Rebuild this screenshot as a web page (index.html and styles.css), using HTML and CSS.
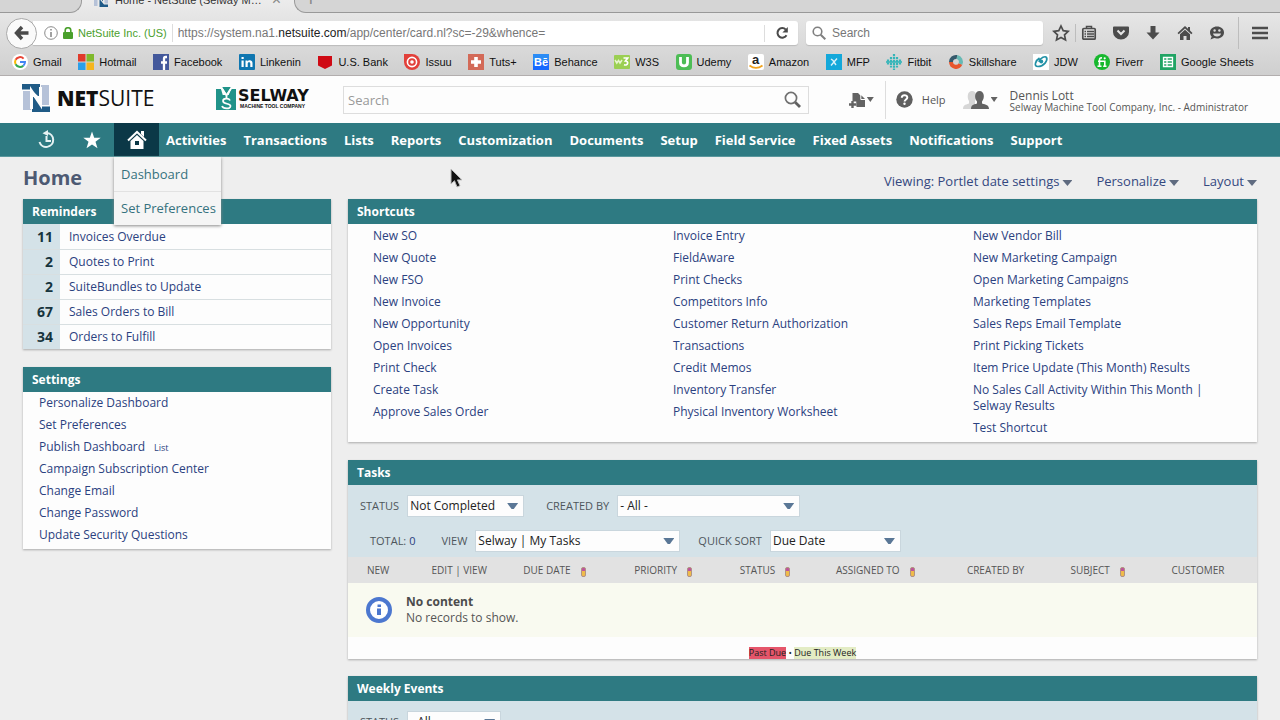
FILE: index.html
```html
<!DOCTYPE html>
<html lang="en">
<head>
<meta charset="utf-8">
<title>Home - NetSuite (Selway Machine Tool Company, Inc.)</title>
<link rel="stylesheet" href="styles.css">
</head>
<body>
<div class="window">
  <div class="browser">
    <div class="tabstrip">
      <div class="tab-edge tab-edge-left"></div>
      <div class="tab">
        <svg class="tab-icon" width="14" height="14" viewBox="0 0 28 28" aria-hidden="true"><path fill="#1f5a88" d="M0 0h18v17L8 5H0zM28 28H11V12l9 11h8z"/><path fill="#b6c2d8" d="M0 7h7v19H0zM21 1h7v20h-7z"/></svg>
        <span class="tab-title">Home - NetSuite (Selway M…</span>
        <button class="tab-close" aria-label="Close tab">×</button>
      </div>
      <div class="tab-edge tab-edge-right"><button class="tab-new" aria-label="New tab">+</button></div>
    </div>

    <div class="toolbar">
      <button class="back" aria-label="Back"><svg width="16" height="16" viewBox="0 0 16 16"><path d="M8 2 2.500 8 8 14M3 8h11.500" fill="none" stroke="#4a4a4a" stroke-width="3.400"/></svg></button>
      <div class="urlbar">
        <svg width="14" height="14" viewBox="0 0 14 14" aria-hidden="true"><circle cx="7" cy="7" r="6.300" fill="none" stroke="#8a8a8a"/><path d="M6.200 3h1.600v1.600H6.200zM6.200 6h1.600v5H6.200z" fill="#8a8a8a"/></svg>
        <svg width="10" height="12" viewBox="0 0 10 12" aria-hidden="true"><path d="M2.200 6V3.500a2.800 2.800 0 0 1 5.600 0V6" fill="none" stroke="#4aa02c" stroke-width="1.600"/><rect y="5" width="10" height="7" rx="1" fill="#4aa02c"/></svg>
        <span class="identity">NetSuite Inc. (US)</span>
        <div class="url" role="textbox" contenteditable="true" aria-label="Address">https://system.na1.<b>netsuite.com</b>/app/center/card.nl?sc=-29&amp;whence=</div>
        <button class="reload" aria-label="Reload"><svg width="14" height="14" viewBox="0 0 14 14"><path d="M11.500 9.200A4.800 4.800 0 1 1 10.800 3.600" fill="none" stroke="#4a4a4a" stroke-width="2"/><path d="M12.800 1v5.400H7.400z" fill="#4a4a4a"/></svg></button>
      </div>
      <div class="websearch">
        <svg width="14" height="14" viewBox="0 0 14 14" aria-hidden="true"><circle cx="5.500" cy="5.500" r="4.300" fill="none" stroke="#808080" stroke-width="1.600"/><path d="m8.700 8.700 4.600 4.600" stroke="#808080" stroke-width="2"/></svg>
        <input type="text" placeholder="Search" aria-label="Web search">
      </div>
      <div class="tools">
        <button aria-label="Bookmark"><svg width="18" height="18" viewBox="0 0 18 18"><path d="m9 2 2.200 4.700 5 .6-3.700 3.500 1 5.100L9 13.400l-4.500 2.500 1-5.100L1.800 7.300l5-.6z" fill="none" stroke="#4c4c4c" stroke-width="1.700"/></svg></button>
        <span class="rule rule-short"></span>
        <button aria-label="Reading list"><svg width="16" height="16" viewBox="0 0 16 16"><path d="M5.500 3V1.500h5V3" fill="none" stroke="#4c4c4c" stroke-width="1.500"/><rect x="1.800" y="3.500" width="12.400" height="10.700" rx="1" fill="none" stroke="#4c4c4c" stroke-width="1.700"/><path d="M3.500 6.500h1.500M6 6.500h7M3.500 9h1.500M6 9h7M3.500 11.500h1.500M6 11.500h7" stroke="#4c4c4c" stroke-width="1.300"/></svg></button>
        <button aria-label="Pocket"><svg width="16" height="16" viewBox="0 0 16 16"><path d="M1 1.500h14a1 1 0 0 1 1 1V7A8 7.500 0 0 1 0 7V2.500a1 1 0 0 1 1-1z" fill="#4c4c4c"/><path d="m4.500 5.500 3.500 3.500 3.500-3.500" fill="none" stroke="#e6e6e6" stroke-width="2"/></svg></button>
        <button aria-label="Downloads"><svg width="16" height="16" viewBox="0 0 16 16"><path d="M5.500 1h5v6.500h4L8 14.500 1.500 7.500h4z" fill="#4c4c4c"/></svg></button>
        <button aria-label="Home page"><svg width="16" height="16" viewBox="0 0 16 16"><path d="M8 1 .5 8l1.200 1.200L8 3.400l6.300 5.800L15.500 8l-2.500-2.400V2h-2v1.700z" fill="#4c4c4c"/><path d="M3 9.200 8 4.700l5 4.500V15H9.500v-4h-3v4H3z" fill="#4c4c4c"/></svg></button>
        <button aria-label="Chat"><svg width="16" height="16" viewBox="0 0 16 16"><path d="M8 1.500c4 0 7 2.500 7 6s-3 6-7 6c-1 0-2-.2-2.800-.4L1.500 14.500l1.200-3C1.600 10.500 1 9 1 7.500c0-3.500 3-6 7-6z" fill="#4c4c4c"/><path d="M4 8.500h8c-.5 4-7.500 4-8 0z" fill="#dcdcdc"/><circle cx="5.600" cy="5.500" r="1.200" fill="#dcdcdc"/><circle cx="10.400" cy="5.500" r="1.200" fill="#dcdcdc"/></svg></button>
        <span class="rule"></span>
        <button aria-label="Menu"><svg width="16" height="14" viewBox="0 0 16 14"><path d="M0 2h16M0 7h16M0 12h16" stroke="#4c4c4c" stroke-width="2.600"/></svg></button>
      </div>
    </div>

    <nav class="bookmarks" aria-label="Bookmarks">
      <a href="#"><svg viewBox="0 0 16 16"><circle cx="8" cy="8" r="8" fill="#fff"/><g fill="none" stroke-width="2"><path d="M11.600 4.600A5 5 0 0 0 3.600 5.800" stroke="#e94335"/><path d="M3.600 5.800a5 5 0 0 0 0 4.500" stroke="#fabb05"/><path d="M3.600 10.300a5 5 0 0 0 7.700 1.400" stroke="#34a853"/><path d="M11.300 11.700A5 5 0 0 0 13 8H8" stroke="#4285f4"/></g></svg>Gmail</a>
      <a href="#"><svg viewBox="0 0 16 16"><path fill="#e03a2b" d="M0 0h7.500v7.500H0z"/><path fill="#7fb92c" d="M8.500 0H16v7.500H8.500z"/><path fill="#2b9fe8" d="M0 8.500h7.500V16H0z"/><path fill="#f5b51c" d="M8.500 8.500H16V16H8.500z"/></svg>Hotmail</a>
      <a href="#"><svg viewBox="0 0 16 16"><path fill="#43589b" d="M0 0h16v16H0z"/><path d="M14 3h-1.500C11.300 3 11 3.800 11 5v11M8 8.500h6" fill="none" stroke="#fff" stroke-width="2.300"/></svg>Facebook</a>
      <a href="#"><svg viewBox="0 0 16 16"><rect width="16" height="16" rx="1" fill="#0f76b0"/><path d="M2.500 6.500h2.200V13H2.500zM2.500 3h2.200v2H2.500zM6.500 6.500h2v1c1-1.800 5-1.800 5 1.500v4h-2.200V9.500c0-1.800-2.600-1.800-2.600 0V13H6.500z" fill="#fff"/></svg>Linkenin</a>
      <a href="#"><svg viewBox="0 0 16 16"><path d="M1 2h14v9.500L8 15l-7-3.500z" fill="#cf0a14"/></svg>U.S. Bank</a>
      <a href="#"><svg viewBox="0 0 16 16"><path d="M0 0h8a8 8 0 1 1-8 8z" fill="#e2403a"/><circle cx="8" cy="8" r="4.600" fill="none" stroke="#fff" stroke-width="1.600"/><circle cx="8" cy="8" r="1.800" fill="#fff"/></svg>Issuu</a>
      <a href="#"><svg viewBox="0 0 16 16"><path fill="#d36a58" d="M0 0h16v16H0z"/><path d="M8 3v10M3 8h10" stroke="#fff" stroke-width="3.600"/></svg>Tuts+</a>
      <a href="#"><svg viewBox="0 0 16 16"><path fill="#1769ff" d="M0 0h16v16H0z"/><path fill="#2b8cf5" d="M0 0h16v7H0z"/><text x="1" y="12" class="glyph glyph-be">Bē</text></svg>Behance</a>
      <a href="#"><svg viewBox="0 0 16 16"><rect y="1" width="16" height="14" rx="1" fill="#9bcf52"/><path d="M1 6l1.800 3L4.500 6.500 6 9l2-3" fill="none" stroke="#e6f5cc" stroke-width="1.500"/><path d="M9.500 4h4.200L11.500 7c3.300 0 2.800 5-1.500 3.800" fill="none" stroke="#fff" stroke-width="1.700"/></svg>W3S</a>
      <a href="#"><svg viewBox="0 0 16 16"><rect width="16" height="16" rx="3" fill="#4dbd55"/><path d="M4.500 3v5.500c0 4.500 7 4.500 7 0V3" fill="none" stroke="#fff" stroke-width="2.800"/></svg>Udemy</a>
      <a href="#"><svg viewBox="0 0 16 16"><rect width="16" height="16" rx="2" fill="#fff"/><text x="4" y="10" class="glyph glyph-a">a</text><path d="M1.500 11.500c4 3 9 3 13 0" fill="none" stroke="#f0a21c" stroke-width="1.700"/></svg>Amazon</a>
      <a href="#"><svg viewBox="0 0 16 16"><path fill="#14a8da" d="M0 0h16v16H0z"/><path d="m5 5 2 1.500L10 11M11 4.500 8 8l-3 3.500" fill="none" stroke="#d9f1fa" stroke-width="1.400"/></svg>MFP</a>
      <a href="#"><svg viewBox="0 0 16 16"><path d="M8 0v16M5 3v10.500M11 3v10.500M2 5.500v5.500M14 5.500v5.500" stroke="#36b5b9" stroke-width="2.200" stroke-dasharray="2.200 .7"/><path d="M0 8h16" stroke="#36b5b9" stroke-width="1.600"/></svg>Fitbit</a>
      <a href="#"><svg viewBox="0 0 16 16"><g fill="none" stroke-width="4"><path d="M9 3a5 5 0 0 0-6 5" stroke="#35596b"/><path d="M3 8a5 5 0 0 0 9.500 2" stroke="#e8562d"/><path d="M9 3a5 5 0 0 1 3.500 7" stroke="#67b9b4"/></g></svg>Skillshare</a>
      <a href="#"><svg viewBox="0 0 16 16"><path fill="#fff" d="M0 0h16v16H0z"/><path d="M6.500 4C3 6 0 12.500 5 12.500c6 0 10-6 8.500-9-1-1.500-6-.5-7.500 4.500" fill="none" stroke="#2191a6" stroke-width="1.700"/><circle cx="8.300" cy="7.500" r="1.900" fill="#2191a6"/></svg>JDW</a>
      <a href="#"><svg viewBox="0 0 16 16"><circle cx="8" cy="8" r="8" fill="#17b82e"/><path d="M5.500 12.500V6c0-1.800 1-2.300 2.500-2M4 7.200h6.800v5.300M3.500 12.300h4M9.200 12.300h3.300" fill="none" stroke="#fff" stroke-width="1.600"/><circle cx="10.700" cy="4.300" r="1.100" fill="#fff"/></svg>Fiverr</a>
      <a href="#"><svg viewBox="0 0 16 16"><path fill="#21a464" d="M0 0h16v16H0z"/><path d="M3.500 3.500h9v9h-9zM3.500 6.500h9M3.500 9.500h9M7 3.500v9" fill="none" stroke="#fff" stroke-width="1.300"/></svg>Google Sheets</a>
    </nav>
  </div>

  <header class="header">
    <a class="netsuite" href="#" aria-label="NetSuite">
      <svg width="28" height="28" viewBox="0 0 28 28" aria-hidden="true"><path fill="#b6c2d8" d="M1 7h8v19H1zM19 1h8v20h-8z"/><path fill="#205b86" d="M0 0h18v12h-2L9 5.500H0zM28 28H10V13h2l8 9.500h8z"/><path d="M9.500 25V7l9 13.500V3" fill="none" stroke="#fdfdfd" stroke-width="3"/></svg>
      <span class="netsuite-word"><b>NET</b><span>SUITE</span></span>
    </a>
    <a class="selway" href="#" aria-label="Selway Machine Tool Company">
      <svg width="20" height="23" viewBox="0 0 20 23" aria-hidden="true"><path fill="#209389" d="M0 2h5l2 7-4 4 4 10H0zM6 0h9l-4.500 7zM15 2h5v21H7z"/><path fill="#209389" d="M0 8h20v15H0z"/><path d="m5 0 5.500 8.500L16 0M10.500 8v3" fill="none" stroke="#fdfdfd" stroke-width="1.800"/><path d="M14 13.500c-1-2.500-7-2.500-7 .5 0 3.500 7.500 2 7.500 5 0 3.500-7.500 3-8.500 0" fill="none" stroke="#fdfdfd" stroke-width="1.700"/></svg>
      <span class="selway-word"><b>SELWAY</b><small>MACHINE TOOL COMPANY</small></span>
    </a>
    <form class="search">
      <input type="text" placeholder="Search" aria-label="Search">
      <button type="button" aria-label="Go"><svg width="18" height="18" viewBox="0 0 18 18"><circle cx="7" cy="7" r="5.600" fill="none" stroke="#707070" stroke-width="1.700"/><path d="m11.200 11.200 4.800 4.800" stroke="#606060" stroke-width="2.800"/></svg></button>
    </form>
    <button class="create" aria-label="Create new">
      <svg width="16" height="18" viewBox="0 0 16 18"><path d="M3.500 2H9l2.500 2.500V15H7.500v-4.500h-4z" fill="#636363"/><path d="M7.500 4.500h5L16 8v8H7.500z" fill="#636363"/><path d="M11.800 4v4.500H16" fill="none" stroke="#fff" stroke-width="1"/><path d="M3.500 10v7M0 13.500h7" stroke="#636363" stroke-width="2.400"/></svg>
      <i class="caret"></i>
    </button>
    <button class="help"><svg width="17" height="17" viewBox="0 0 17 17"><circle cx="8.500" cy="8.500" r="8.200" fill="#5f5f5f"/><path d="M5.800 6.700c0-3.300 5.500-3.200 5.500-.2 0 1.900-2.700 2-2.700 4" fill="none" stroke="#fff" stroke-width="2"/><circle cx="8.500" cy="12.800" r="1.200" fill="#fff"/></svg>Help</button>
    <button class="user">
      <svg width="27" height="20" viewBox="0 0 27 20" aria-hidden="true"><path d="M0 19c0-4 2-4 6-5.500V11C4 8 4 1 9 1s5 6 3 10v8z" fill="#d6d6d6"/><path d="M8 19c0-4 2-4.200 6-5.500v-2C11 8 11.500 1 16.500 1s5.500 7 2.500 10.500v2c4 1.300 7 1.500 7 5.500z" fill="#636363"/></svg>
      <i class="caret"></i>
      <span class="who"><span class="who-name">Dennis Lott</span><span class="who-role">Selway Machine Tool Company, Inc. - Administrator</span></span>
    </button>
  </header>

  <nav class="mainnav" aria-label="Main">
    <a class="nav-icon" href="#" aria-label="Recent records"><svg width="20" height="20" viewBox="0 0 20 20"><path d="M10 3a7 7 0 1 1-7.500 9" fill="none" stroke="#e6f2f3" stroke-width="2"/><path d="M11 0v6L5.500 3.200z" fill="#e6f2f3"/><path d="M9.500 6v5h4.500" fill="none" stroke="#e6f2f3" stroke-width="2"/></svg></a>
    <a class="nav-icon" href="#" aria-label="Shortcuts"><svg width="18" height="18" viewBox="0 0 18 18"><path d="m9 .5 2.200 6.200h6.500l-5.200 4 2 6.500L9 13.400l-5.500 3.800 2-6.500-5.200-4h6.500z" fill="#fff"/></svg></a>
    <div class="nav-home">
      <a class="nav-icon nav-current" href="#" aria-label="Home"><svg width="20" height="20" viewBox="0 0 20 20"><path d="M14 1h3v6l-3-3z" fill="#fff"/><path d="m1 10.500 9-8.500 9 8.500" fill="none" stroke="#fff" stroke-width="2"/><path d="m3.500 11 6.500-6 6.500 6v8h-13z" fill="#fff"/><path d="M8 11h4v4H8z" fill="#0b3847"/></svg></a>
      <div class="submenu"><a href="#">Dashboard</a><a href="#">Set Preferences</a></div>
    </div>
    <div class="nav-links">
      <a href="#">Activities</a><a href="#">Transactions</a><a href="#">Lists</a><a href="#">Reports</a><a href="#">Customization</a><a href="#">Documents</a><a href="#">Setup</a><a href="#">Field Service</a><a href="#">Fixed Assets</a><a href="#">Notifications</a><a href="#">Support</a>
    </div>
  </nav>

  <main class="page">
    <div class="title-row">
      <h1>Home</h1>
      <div class="page-actions">
        <button>Viewing: Portlet date settings<i class="caret"></i></button>
        <button>Personalize<i class="caret"></i></button>
        <button>Layout<i class="caret"></i></button>
      </div>
    </div>

    <div class="columns">
      <div class="side">
        <section class="portlet">
          <h2>Reminders</h2>
          <table class="reminders">
            <tr><th scope="row">11</th><td><a href="#">Invoices Overdue</a></td></tr>
            <tr><th scope="row">2</th><td><a href="#">Quotes to Print</a></td></tr>
            <tr><th scope="row">2</th><td><a href="#">SuiteBundles to Update</a></td></tr>
            <tr><th scope="row">67</th><td><a href="#">Sales Orders to Bill</a></td></tr>
            <tr><th scope="row">34</th><td><a href="#">Orders to Fulfill</a></td></tr>
          </table>
        </section>
        <section class="portlet">
          <h2>Settings</h2>
          <ul class="links settings">
            <li><a href="#">Personalize Dashboard</a></li>
            <li><a href="#">Set Preferences</a></li>
            <li><a href="#">Publish Dashboard</a><a class="minor" href="#">List</a></li>
            <li><a href="#">Campaign Subscription Center</a></li>
            <li><a href="#">Change Email</a></li>
            <li><a href="#">Change Password</a></li>
            <li><a href="#">Update Security Questions</a></li>
          </ul>
        </section>
      </div>

      <div class="main">
        <section class="portlet">
          <h2>Shortcuts</h2>
          <div class="shortcuts">
            <ul class="links">
              <li><a href="#">New SO</a></li><li><a href="#">New Quote</a></li><li><a href="#">New FSO</a></li><li><a href="#">New Invoice</a></li><li><a href="#">New Opportunity</a></li><li><a href="#">Open Invoices</a></li><li><a href="#">Print Check</a></li><li><a href="#">Create Task</a></li><li><a href="#">Approve Sales Order</a></li>
            </ul>
            <ul class="links">
              <li><a href="#">Invoice Entry</a></li><li><a href="#">FieldAware</a></li><li><a href="#">Print Checks</a></li><li><a href="#">Competitors Info</a></li><li><a href="#">Customer Return Authorization</a></li><li><a href="#">Transactions</a></li><li><a href="#">Credit Memos</a></li><li><a href="#">Inventory Transfer</a></li><li><a href="#">Physical Inventory Worksheet</a></li>
            </ul>
            <ul class="links">
              <li><a href="#">New Vendor Bill</a></li><li><a href="#">New Marketing Campaign</a></li><li><a href="#">Open Marketing Campaigns</a></li><li><a href="#">Marketing Templates</a></li><li><a href="#">Sales Reps Email Template</a></li><li><a href="#">Print Picking Tickets</a></li><li><a href="#">Item Price Update (This Month) Results</a></li><li><a href="#">No Sales Call Activity Within This Month | Selway Results</a></li><li><a href="#">Test Shortcut</a></li>
            </ul>
          </div>
        </section>

        <section class="portlet portlet-tasks">
          <h2>Tasks</h2>
          <div class="filters">
            <div class="filter-row">
              <label for="task-status">Status</label>
              <span class="select w-status"><select id="task-status"><option>Not Completed</option></select></span>
              <label for="task-by">Created By</label>
              <span class="select w-by"><select id="task-by"><option>- All -</option></select></span>
            </div>
            <div class="filter-row filter-row-total">
              <span class="total">Total: <a href="#">0</a></span>
              <label for="task-view">View</label>
              <span class="select w-view"><select id="task-view"><option>Selway | My Tasks</option></select></span>
              <label for="task-sort">Quick Sort</label>
              <span class="select w-sort"><select id="task-sort"><option>Due Date</option></select></span>
            </div>
          </div>
          <table class="tasks">
            <thead><tr>
              <th class="c-new">New</th><th class="c-edit">Edit | View</th><th class="c-due">Due Date<i class="pencil"></i></th><th class="c-pri">Priority<i class="pencil"></i></th><th class="c-status">Status<i class="pencil"></i></th><th class="c-to">Assigned To<i class="pencil"></i></th><th class="c-by">Created By</th><th class="c-subj">Subject<i class="pencil"></i></th><th>Customer</th>
            </tr></thead>
            <tbody><tr><td colspan="9">
              <div class="empty">
                <svg width="26" height="26" viewBox="0 0 26 26" aria-hidden="true"><circle cx="13" cy="13" r="11" fill="#fff" stroke="#4c77cf" stroke-width="4"/><path d="M11.500 7.500h3.500v2.500h-3.500zM11 11.500h4V18h-4z" fill="#4c77cf"/></svg>
                <div><b>No content</b><p>No records to show.</p></div>
              </div>
            </td></tr></tbody>
          </table>
          <div class="legend"><span class="past">Past Due</span> • <span class="week">Due This Week</span></div>
        </section>

        <section class="portlet">
          <h2>Weekly Events</h2>
          <div class="filters">
            <div class="filter-row">
              <label for="event-status">Status</label>
              <span class="select w-event"><select id="event-status"><option>- All -</option></select></span>
            </div>
          </div>
        </section>
      </div>
    </div>
  </main>

  <svg class="pointer" width="16" height="22" viewBox="0 0 16 22" aria-hidden="true"><path d="M1 1v15l3.500-3.300L7 19l3-1.300-2.600-5.800H12z" fill="#111" stroke="#bbb" stroke-width="1"/></svg>
</div>
</body>
</html>
```
FILE: styles.css
```css
* { box-sizing: border-box; }
body {
  margin: 0;
  background: #eee;
  color: #555;
  font: 12px/16px "Open Sans", "Noto Sans", sans-serif;
}
a { color: #2b4180; text-decoration: none; }
button {
  display: flex;
  align-items: center;
  padding: 0;
  border: 0;
  background: none;
  color: inherit;
  font: inherit;
}
input { border: 0; outline: 0; padding: 0; background: none; font: inherit; min-width: 0; flex: 1; }
h1, h2, ul, p { margin: 0; padding: 0; }
svg { flex: none; }
table { width: 100%; border-collapse: collapse; }
.window { position: relative; height: 100vh; overflow: hidden; }
.caret {
  width: 10px;
  height: 6px;
  background: #5f6b80;
  clip-path: polygon(0 0, 100% 0, 50% 100%);
}

/* Browser chrome */
.browser {
  font-family: "Liberation Sans", Arial, sans-serif;
  background: linear-gradient(#ececec 12px, #dedede 46px, #cfcfcf);
  border-bottom: 1px solid #b2aeae;
}
.tabstrip { display: flex; height: 25px; margin-top: -12px; }
.tab-edge { background: #d5d5d5; border-bottom: 1px solid #999; }
.tab-edge-left { width: 82px; border-right: 1px solid #999; border-bottom-right-radius: 12px; }
.tab-edge-right { flex: 1; border-left: 1px solid #999; border-bottom-left-radius: 12px; padding-left: 10px; }
.tab { display: flex; align-items: center; width: 212px; padding: 0 10px 2px 12px; gap: 7px; color: #333; font-size: 11px; }
.tab-title { white-space: nowrap; }
.tab-close, .tab-new { color: #888; font-size: 16px; line-height: 22px; }
.tab-close { margin-left: 3px; }
.tab-new { font-size: 20px; }
.toolbar { display: flex; align-items: center; height: 40px; padding: 0 12px 0 6px; }
.back {
  position: relative;
  z-index: 1;
  justify-content: center;
  width: 31px;
  height: 31px;
  border: 1px solid #a9a9a9;
  border-radius: 50%;
  background: #fafafa;
}
.urlbar {
  flex: 1;
  display: flex;
  align-items: center;
  gap: 5px;
  height: 24px;
  margin-left: -4px;
  padding-left: 11px;
  background: #fff;
  border-radius: 0 3px 3px 0;
  box-shadow: 0 1px 1px #bbb;
}
.identity { color: #4aa02c; font-size: 11px; padding-right: 5px; border-right: 1px solid #ddd; line-height: 18px; white-space: nowrap; }
.url { flex: 1; font-size: 12px; color: #777; white-space: nowrap; overflow: hidden; outline: 0; }
.url b { color: #222; font-weight: 400; }
.reload { justify-content: center; width: 34px; height: 17px; border-left: 1px solid #ddd; }
.websearch {
  display: flex;
  align-items: center;
  gap: 6px;
  width: 237px;
  height: 24px;
  margin-left: 8px;
  padding: 0 6px;
  background: #fff;
  border-radius: 3px;
  box-shadow: 0 1px 1px #bbb;
  font-size: 12px;
}
.websearch input::placeholder { color: #777; }
.tools { display: flex; align-items: center; gap: 16px; margin-left: 9px; }
.rule { width: 1px; height: 32px; margin: 0 -3px; background: #bdbdbd; }
.rule-short { height: 18px; margin: 0 -11px; }
.bookmarks { display: flex; justify-content: space-between; align-items: center; height: 24px; margin-top: -2px; padding: 0 26px 2px 12px; }
.bookmarks a { display: flex; align-items: center; gap: 5px; color: #111; font-size: 11px; white-space: nowrap; }
.bookmarks svg { width: 16px; height: 16px; }
.glyph { font-family: "Liberation Sans", Arial, sans-serif; font-weight: 700; }
.glyph-be { font-size: 11px; fill: #fff; }
.glyph-a { font-size: 13px; fill: #222; }

/* Application header */
.header { display: flex; align-items: center; height: 47px; padding: 0 22px; background: #fdfdfd; white-space: nowrap; }
.netsuite { display: flex; align-items: center; gap: 7px; width: 194px; color: #111; font-size: 21px; line-height: 28px; padding-bottom: 4px; }
.netsuite-word b { font-weight: 800; }
.netsuite-word span { font-weight: 400; }
.selway { display: flex; align-items: center; gap: 2px; width: 127px; padding-bottom: 2px; color: #111; }
.selway-word { display: flex; flex-direction: column; font: 700 16px/14px "DejaVu Sans", sans-serif; }
.selway-word small { font: 700 5px/6px "Liberation Sans", sans-serif; padding-left: 2px; }
.search { flex: 1; display: flex; height: 28px; padding: 0 6px 0 4px; border: 1px solid #ddd; font-size: 13px; }
.search input::placeholder { color: #999; }
.create { gap: 2px; width: 77px; height: 38px; padding-left: 40px; border-right: 1px solid #ddd; }
.create .caret, .user .caret { width: 7px; height: 5px; background: #636363; }
.help { gap: 9px; margin-left: 10px; font-size: 11px; }
.user { gap: 1px; margin-left: 17px; padding-right: 10px; text-align: left; }
.who { display: flex; flex-direction: column; margin-left: 11px; padding-top: 2px; }
.who-name { font-size: 12px; line-height: 12px; }
.who-role { font-size: 10px; line-height: 10px; }

/* Main navigation */
.mainnav { display: flex; height: 34px; padding-left: 24px; background: #2e7a82; border-bottom: 1px solid #5a979d; }
.nav-icon { display: flex; align-items: center; justify-content: center; width: 45px; height: 33px; }
.nav-home { position: relative; }
.nav-current { background: #0b3847; }
.nav-links { display: flex; align-items: center; gap: 17px; padding-left: 7px; }
.nav-links a { color: #fff; font-size: 13px; font-weight: 700; white-space: nowrap; }
.submenu {
  position: absolute;
  z-index: 2;
  top: 34px;
  left: 0;
  background: #f5f5f5;
  box-shadow: 0 1px 3px #888;
}
.submenu a { display: block; padding: 0 5px 0 7px; color: #35727e; font-size: 13px; line-height: 34px; white-space: nowrap; }
.submenu a + a { border-top: 1px solid #e2e2e2; line-height: 33px; }

/* Dashboard */
.page { padding: 0 23px; }
.title-row { display: flex; justify-content: space-between; align-items: center; height: 42px; }
h1 { color: #4d5a73; font-size: 20px; line-height: 28px; }
.page-actions { display: flex; gap: 24px; padding-top: 5px; color: #34487f; font-size: 13px; }
.page-actions button { gap: 3px; }
.page-actions .caret { margin-top: 5px; }
.columns { display: flex; gap: 17px; }
.side { flex: 0 0 308px; }
.main { flex: 1; min-width: 0; }
.portlet { margin-bottom: 18px; background: #fdfdfd; box-shadow: 0 1px 2px #aaa; }
.portlet h2 { padding-left: 9px; background: #2e7a82; color: #fff; font-size: 12px; line-height: 25px; }
.portlet-tasks { margin-bottom: 17px; }
.reminders th { width: 37px; padding: 1px 7px 0 0; background: #d4e2e8; color: #17343d; font-size: 14px; text-align: right; }
.reminders td { padding: 1px 9px 0; }
.reminders tr { height: 25px; }
.reminders tr + tr { border-top: 1px solid #d8dfe1; }
.links { list-style: none; padding-bottom: 3px; }
.links li { padding: 3px 0; }
.settings { padding-left: 16px; }
.settings li { line-height: 16px; height: 22px; }
.minor { margin-left: 9px; font-size: 9px; }
.shortcuts { display: grid; grid-template-columns: repeat(3, 1fr); gap: 20px; padding: 1px 4px 0 25px; }
.shortcuts .links { padding-right: 40px; }
.filters { padding: 10px 12px 5px; background: #d4e2e8; }
.filter-row { display: flex; align-items: center; height: 22px; margin-bottom: 13px; gap: 8px; }
.filter-row-total { padding-left: 10px; margin-bottom: 0; }
.filter-row label, .total { color: #4e565b; font-size: 11px; text-transform: uppercase; white-space: nowrap; }
.total { margin-right: 18px; }
.select { position: relative; margin-right: 14px; }
.filter-row-total .select { margin-right: 10px; }
.select::after {
  content: "";
  position: absolute;
  top: 8px;
  right: 6px;
  width: 11px;
  height: 6px;
  background: #5a7796;
  clip-path: polygon(0 0, 100% 0, 60% 100%, 40% 100%);
  pointer-events: none;
}
.select select {
  appearance: none;
  width: 100%;
  height: 22px;
  padding: 0 2px;
  border: 1px solid #c9d6dd;
  border-radius: 0;
  background: #fdfdfd;
  color: #222;
  font: inherit;
}
.w-status { width: 117px; }
.w-by { width: 183px; }
.w-view { width: 205px; }
.w-sort { width: 131px; }
.w-event { width: 94px; }
.tasks { table-layout: fixed; }
.tasks th { height: 26px; padding: 0 0 0 19px; background: #e2e2e2; color: #555; font-size: 10px; font-weight: 400; text-align: left; text-transform: uppercase; white-space: nowrap; }
.c-new { width: 7.1%; }
.c-edit { width: 10.1%; }
.c-due { width: 12.2%; }
.c-pri { width: 11.6%; }
.c-status { width: 10.6%; }
.c-to { width: 14.4%; }
.c-by { width: 11.4%; }
.c-subj { width: 11.1%; }
.pencil {
  display: inline-block;
  width: 5px;
  height: 10px;
  margin-left: 10px;
  border: 1px solid #b09484;
  border-radius: 2px;
  background: linear-gradient(#c0529c 35%, #f0bb4a 35%);
  vertical-align: -3px;
}
.tasks td { padding: 0; background: #f9faf0; }
.empty { display: flex; align-items: center; gap: 14px; height: 54px; padding-left: 18px; }
.empty b { color: #4c4c4c; }
.legend { height: 22px; padding-top: 10px; color: #222; font-size: 9px; line-height: 12px; text-align: center; }
.past { background: #e5556a; display: inline-block; }
.week { background: #e3ecc4; display: inline-block; }

.pointer { position: absolute; z-index: 3; left: 450px; top: 168px; }
```
